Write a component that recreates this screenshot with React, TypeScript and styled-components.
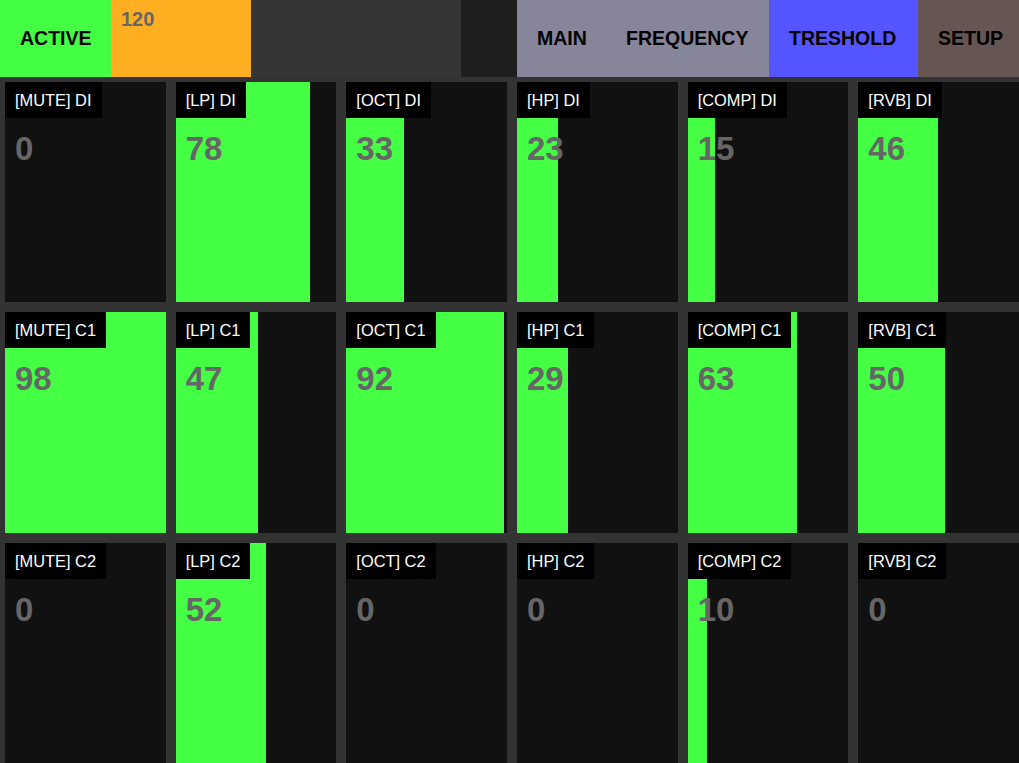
import React from "react";
import styled, { createGlobalStyle } from "styled-components";

const GlobalStyle = createGlobalStyle`
  html, body {
    margin: 0;
    padding: 0;
    background: #333333;
    overflow: hidden;
  }
  * { box-sizing: border-box; }
`;

const Screen = styled.div`
  width: 1019px;
  height: 763px;
  display: flex;
  flex-direction: column;
  background: #333333;
  font-family: "Liberation Sans", Arial, sans-serif;
`;

const TopBar = styled.div`
  display: flex;
  height: 77px;
  flex: 0 0 77px;
`;

const TabButton = styled.div<{ $bg: string; $w: number }>`
  width: ${(p) => p.$w}px;
  flex: 0 0 ${(p) => p.$w}px;
  background: ${(p) => p.$bg};
  display: flex;
  align-items: center;
  padding-left: 20px;
  font-weight: 700;
  font-size: 19.5px;
  color: #000;
  white-space: nowrap;
  overflow: hidden;
`;

const TempoBox = styled.div`
  width: 140px;
  flex: 0 0 140px;
  background: #ffae21;
  padding: 8px 0 0 10px;
  font-weight: 700;
  font-size: 20px;
  color: #666666;
`;

const Spacer = styled.div<{ $bg: string; $w: number }>`
  width: ${(p) => p.$w}px;
  flex: 0 0 ${(p) => p.$w}px;
  background: ${(p) => p.$bg};
`;

const Grid = styled.div`
  flex: 1;
  display: grid;
  grid-template-columns: repeat(6, 1fr);
  grid-template-rows: repeat(3, 1fr);
  gap: 10px;
  padding: 5px 0 0 5px;
  min-height: 0;
`;

const Cell = styled.div<{ $fill: number }>`
  background: linear-gradient(
    to right,
    #44ff44 0,
    #44ff44 ${(p) => p.$fill}px,
    #111111 ${(p) => p.$fill}px,
    #111111 100%
  );
  display: flex;
  flex-direction: column;
  align-items: flex-start;
  overflow: hidden;
`;

const Label = styled.div`
  background: #000;
  color: #fff;
  font-size: 16.4px;
  line-height: 36px;
  height: 36px;
  padding: 0 10px;
  white-space: nowrap;
`;

const Value = styled.div`
  margin-top: 12px;
  padding-left: 10px;
  font-size: 33px;
  font-weight: 700;
  color: #666666;
`;

const channels = ["DI", "C1", "C2"];
const effects = ["MUTE", "LP", "OCT", "HP", "COMP", "RVB"];
const values = [
  [0, 78, 33, 23, 15, 46],
  [98, 47, 92, 29, 63, 50],
  [0, 52, 0, 0, 10, 0],
];

const fillWidth = (v: number) => (v === 0 ? 0 : ((v + 1) / 100) * 169.8);

export default function App() {
  return (
    <>
      <GlobalStyle />
      <Screen>
        <TopBar>
          <TabButton $bg="#44ff44" $w={111}>ACTIVE</TabButton>
          <TempoBox>120</TempoBox>
          <Spacer $bg="#353535" $w={210} />
          <Spacer $bg="#1f1f1f" $w={56} />
          <TabButton $bg="#87859a" $w={89}>MAIN</TabButton>
          <TabButton $bg="#87859a" $w={163}>FREQUENCY</TabButton>
          <TabButton $bg="#5555ff" $w={149}>TRESHOLD</TabButton>
          <TabButton $bg="#655553" $w={101}>SETUP</TabButton>
        </TopBar>
        <Grid>
          {channels.map((ch, r) =>
            effects.map((fx, c) => (
              <Cell key={`${ch}-${fx}`} $fill={fillWidth(values[r][c])}>
                <Label>[{fx}] {ch}</Label>
                <Value>{values[r][c]}</Value>
              </Cell>
            ))
          )}
        </Grid>
      </Screen>
    </>
  );
}
